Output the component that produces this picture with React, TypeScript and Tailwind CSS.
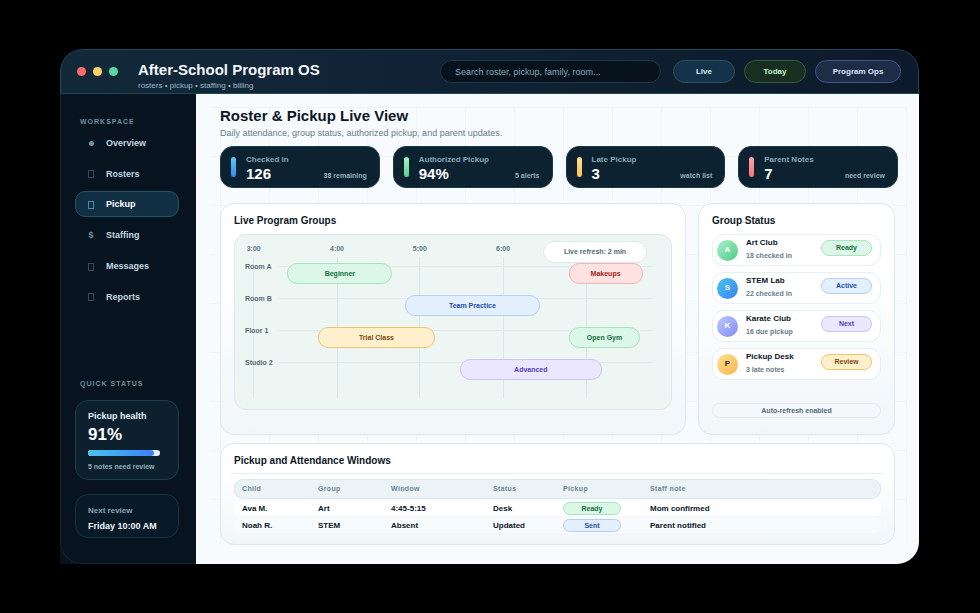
const navItems = [
    { label: "Overview", icon: "dot" },
    { label: "Rosters", icon: "box" },
    { label: "Pickup", icon: "box", active: true },
    { label: "Staffing", icon: "dollar" },
    { label: "Messages", icon: "box" },
    { label: "Reports", icon: "box" },
];

const stats = [
    { label: "Checked In", value: "126", note: "38 remaining", bar: "from-[#5cc8f5] to-[#3b82f6]" },
    { label: "Authorized Pickup", value: "94%", note: "5 alerts", bar: "from-[#a7f3c8] to-[#4fd18f]" },
    { label: "Late Pickup", value: "3", note: "watch list", bar: "from-[#fde293] to-[#fbbf52]" },
    { label: "Parent Notes", value: "7", note: "need review", bar: "from-[#fca5ac] to-[#f87178]" },
];

const tones = {
    green: "bg-[#dcf7e7] border-[#a5e6be] text-[#14713a]",
    blue: "bg-[#e4effe] border-[#b3cff8] text-[#1d4fa8]",
    purple: "bg-[#ebe7fe] border-[#cdc3fa] text-[#5540b4]",
    amber: "bg-[#fef0cd] border-[#f0c568] text-[#7c4a0c]",
    red: "bg-[#fee2e2] border-[#f8b4b4] text-[#a01c1c]",
};

type Tone = keyof typeof tones;

const hours = [
    { label: "3:00", left: 4.3 },
    { label: "4:00", left: 23.4 },
    { label: "5:00", left: 42.4 },
    { label: "6:00", left: 61.5 },
    { label: "", left: 80.6 },
];

const rooms: { name: string; events: { label: string; left: number; width: number; tone: Tone }[] }[] = [
    {
        name: "Room A",
        events: [
            { label: "Beginner", left: 12, width: 24.1, tone: "green" },
            { label: "Makeups", left: 76.5, width: 17, tone: "red" },
        ],
    },
    { name: "Room B", events: [{ label: "Team Practice", left: 38.9, width: 31.1, tone: "blue" }] },
    {
        name: "Floor 1",
        events: [
            { label: "Trial Class", left: 19, width: 26.9, tone: "amber" },
            { label: "Open Gym", left: 76.5, width: 16.5, tone: "green" },
        ],
    },
    { name: "Studio 2", events: [{ label: "Advanced", left: 51.6, width: 32.5, tone: "purple" }] },
];

const groups: { name: string; note: string; status: string; tone: Tone; avatar: string }[] = [
    { name: "Art Club", note: "18 checked in", status: "Ready", tone: "green", avatar: "from-[#a7f3c8] to-[#4cc88a] text-white" },
    { name: "STEM Lab", note: "22 checked in", status: "Active", tone: "blue", avatar: "from-[#4cc3ee] to-[#3b82f6] text-white" },
    { name: "Karate Club", note: "16 due pickup", status: "Next", tone: "purple", avatar: "from-[#bcc8fd] to-[#818cf8] text-white" },
    { name: "Pickup Desk", note: "3 late notes", status: "Review", tone: "amber", avatar: "from-[#fde08f] to-[#f7b751] text-[#3b2a08]" },
];

const records: { child: string; group: string; window: string; status: string; pickup: string; tone: Tone; note: string }[] = [
    { child: "Ava M.", group: "Art", window: "4:45-5:15", status: "Desk", pickup: "Ready", tone: "green", note: "Mom confirmed" },
    { child: "Noah R.", group: "STEM", window: "Absent", status: "Updated", pickup: "Sent", tone: "blue", note: "Parent notified" },
];

const panel = "rounded-[14px] border border-[#dbe8ef] bg-gradient-to-b from-white from-30% to-[#f1f6f9]";

function NavIcon({ icon, active }: { icon: string; active?: boolean }) {
    if (icon === "dot") return <span className="h-[5px] w-[5px] rounded-full bg-[#6d93a6]" />;
    if (icon === "dollar") return <span className="text-[9px] text-[#6d93a6]">$</span>;
    return <span className={`h-2 w-[6px] border ${active ? "border-[#3f8fa6]" : "border-[#2f4a59]"}`} />;
}

function Header() {
    return (
        <header className="flex h-[45px] items-start rounded-t-[22px] border border-[#1f4756] bg-gradient-to-r from-[#12293a] to-[#0d1a2b] pt-[10px] pr-[17px] pl-4">
            <div className="flex h-[22px] items-center gap-[7px]">
                <span className="h-[9px] w-[9px] rounded-full bg-[#ff6b6b]" />
                <span className="h-[9px] w-[9px] rounded-full bg-[#ffd166]" />
                <span className="h-[9px] w-[9px] rounded-full bg-[#5ad69a]" />
            </div>
            <div className="ml-5 flex-1">
                <p className="text-[15px] leading-5 font-bold text-[#f1f7fb]">After-School Program OS</p>
                <p className="text-[8px] leading-[11px] text-[#9db8c6]">rosters • pickup • staffing • billing</p>
            </div>
            <input
                type="text"
                aria-label="Search"
                placeholder="Search roster, pickup, family, room..."
                className="h-[23px] w-[221px] rounded-full border border-[#1b3947] bg-[#07121d] px-[14px] text-[9px] text-white placeholder:text-[#8ba4b1] focus:outline-none"
            />
            <div className="ml-3 flex gap-[9px] text-[8px] font-bold">
                <button className="h-[23px] w-[62px] rounded-full border border-[#245064] bg-[#14334a] text-[#d6effa]">Live</button>
                <button className="h-[23px] w-[62px] rounded-full border border-[#2c6041] bg-[#182e20] text-[#c6f5d2]">Today</button>
                <button className="h-[23px] w-[86px] rounded-full border border-[#3e5590] bg-[#1f2c47] text-[#dbe3fb]">Program Ops</button>
            </div>
        </header>
    );
}

function Sidebar() {
    return (
        <aside className="w-[136px] shrink-0 bg-[#07131f]">
            <div className="h-full rounded-bl-[22px] border-b border-l border-[#122833] pr-[17px] pl-[14px]">
                <p className="pt-[23px] pl-[5px] text-[7px] leading-[10px] font-bold tracking-[1px] text-[#6f8e9e]">WORKSPACE</p>
                <nav className="mt-[2px] flex h-[180px] flex-col justify-between">
                    {navItems.map((item) => (
                        <a
                            key={item.label}
                            href="#"
                            className={`flex h-[26px] items-center rounded-[10px] border pt-[3px] pl-[10px] text-[9px] font-bold ${item.active ? "border-[#265064] bg-[#112f42] text-white" : "border-transparent text-[#c2d8e2]"}`}
                        >
                            <span className="mr-[10px] flex w-[10px] justify-center">
                                <NavIcon icon={item.icon} active={item.active} />
                            </span>
                            {item.label}
                        </a>
                    ))}
                </nav>
                <p className="mt-[70px] pl-[5px] text-[7px] leading-[10px] font-bold tracking-[1px] text-[#6f8e9e]">QUICK STATUS</p>
                <section className="mt-[11px] rounded-[13px] border border-[#1b3d4b] bg-[#0d202e] px-3 pt-[9px] pb-[7px]">
                    <h2 className="text-[9px] leading-3 font-bold text-[#e2f0f6]">Pickup health</h2>
                    <p className="mt-[3px] text-[17px] leading-5 font-bold text-white">91%</p>
                    <div className="mt-[5px] mr-[6px] h-[6px] overflow-hidden rounded-full bg-[#e8f1fa]">
                        <div className="h-full w-[91%] rounded-full bg-gradient-to-r from-[#4cc3ee] to-[#3b82f6]" />
                    </div>
                    <p className="mt-[6px] text-[7px] leading-[10px] font-bold text-[#93b0be]">5 notes need review</p>
                </section>
                <section className="mt-[14px] rounded-[13px] border border-[#16343f] bg-[#081a27] px-3 pt-[10px] pb-[5px]">
                    <h2 className="text-[8px] leading-3 font-bold text-[#86a5b4]">Next review</h2>
                    <p className="mt-[3px] text-[9px] leading-3 font-bold text-[#eef7fb]">Friday 10:00 AM</p>
                </section>
            </div>
        </aside>
    );
}

function GridLines() {
    return (
        <svg className="pointer-events-none absolute top-[13px] left-[14px] h-[437px] w-[697px]" aria-hidden="true">
            <defs>
                <pattern id="grid" width="49" height="49" patternUnits="userSpaceOnUse">
                    <path d="M10.5 0V49M0 .5H49" stroke="#f0f5f9" fill="none" />
                </pattern>
            </defs>
            <rect width="100%" height="100%" fill="url(#grid)" />
        </svg>
    );
}

function Schedule() {
    return (
        <section className={`${panel} flex-1 px-[13px] pt-[9px] pb-6`}>
            <h2 className="text-[10px] leading-4 font-bold text-[#0b1626]">Live Program Groups</h2>
            <div className="relative mt-[5px] h-[176px] rounded-[12px] border border-[#dbe9ea] bg-[#eef6f3] pt-[31px]">
                {hours.map((hour) => (
                    <div
                        key={hour.left}
                        className="absolute top-[9px] flex w-10 -translate-x-1/2 flex-col items-center text-[7px] leading-[10px] font-bold text-[#5d7581]"
                        style={{ left: `${hour.left}%` }}
                    >
                        <span className="h-[13px]">{hour.label}</span>
                        <span className="h-[141px] w-px bg-[#d8e8ea]" />
                    </div>
                ))}
                {rooms.map((room) => (
                    <div key={room.name} className="relative flex h-8 items-start pr-[18px] pl-[10px]">
                        <span className="relative -mt-1 w-[34px] text-[7px] leading-[10px] font-bold whitespace-nowrap text-[#526b78]">{room.name}</span>
                        <span className="h-px flex-1 bg-[#dfecee]" />
                        {room.events.map((event) => (
                            <div
                                key={event.label}
                                className={`absolute -top-[3px] flex h-[21px] items-center justify-center rounded-[10px] border pt-[2px] text-[7px] font-bold ${tones[event.tone]}`}
                                style={{ left: `${event.left}%`, width: `${event.width}%` }}
                            >
                                {event.label}
                            </div>
                        ))}
                    </div>
                ))}
                <div className="absolute top-[6px] right-6 flex h-[22px] w-[104px] items-center justify-center rounded-full border border-[#dbe9ea] bg-white text-[7px] font-bold text-[#526b78]">
                    Live refresh: 2 min
                </div>
            </div>
        </section>
    );
}

function GroupStatus() {
    return (
        <section className={`${panel} w-[197px] px-[13px] pt-[9px]`}>
            <h2 className="text-[10px] leading-4 font-bold text-[#0b1626]">Group Status</h2>
            <ul className="mt-[5px] flex flex-col gap-[6px]">
                {groups.map((group) => (
                    <li key={group.name} className="flex h-8 items-center rounded-[12px] border border-[#e6eff3] bg-white pr-2 pl-1">
                        <span className={`flex h-[21px] w-[21px] items-center justify-center rounded-full bg-gradient-to-br text-[8px] font-bold ${group.avatar}`}>
                            {group.name[0]}
                        </span>
                        <div className="ml-2 flex-1 font-bold">
                            <p className="-mt-[2px] text-[8px] leading-[13px] text-[#0b1626]">{group.name}</p>
                            <p className="text-[7px] leading-[13px] text-[#647d89]">{group.note}</p>
                        </div>
                        <span className={`mb-1 flex h-4 w-[51px] items-center justify-center rounded-full border pt-px text-[7px] font-bold ${tones[group.tone]}`}>
                            {group.status}
                        </span>
                    </li>
                ))}
            </ul>
            <p className="mt-[23px] rounded-full border border-[#dfebf0] bg-[#f4f8fa] text-center text-[7px] leading-[13px] font-bold text-[#526b78]">
                Auto-refresh enabled
            </p>
        </section>
    );
}

function Attendance() {
    return (
        <section className={`${panel} mt-2 mr-[3px] px-[13px] pt-2 pb-[9px]`}>
            <h2 className="text-[10px] leading-[18px] font-bold text-[#0b1626]">Pickup and Attendance Windows</h2>
            <hr className="-mx-[3px] mt-[3px] border-[#e6eff3]" />
            <table className="mt-[3px] w-full table-fixed border-separate border-spacing-x-0 border-spacing-y-[2px] text-left text-[8px]">
                <thead>
                    <tr className="h-5 text-[7px] tracking-wider text-[#6b8490] [&>th]:border-y [&>th]:border-[#dbe8ec] [&>th]:bg-[#ecf3f6] [&>th]:p-0 [&>th]:pl-2 [&>th:first-child]:pl-[7px]">
                        <th className="w-[76px] rounded-l-[9px] border-l">Child</th>
                        <th className="w-[73px]">Group</th>
                        <th className="w-[102px]">Window</th>
                        <th className="w-[70px]">Status</th>
                        <th className="w-[87px]">Pickup</th>
                        <th className="rounded-r-[9px] border-r">Staff note</th>
                    </tr>
                </thead>
                <tbody className="font-bold text-[#0b1626]">
                    {records.map((record) => (
                        <tr key={record.child} className="h-[15px] leading-[13px] [&>td]:p-0 [&>td]:pl-2 odd:[&>td]:bg-white [&:nth-child(even)>td]:bg-[#f8fbfd]">
                            <td className="rounded-l-md">{record.child}</td>
                            <td>{record.group}</td>
                            <td>{record.window}</td>
                            <td>{record.status}</td>
                            <td>
                                <span className={`block h-[13px] w-[58px] rounded-full border text-center text-[7px] leading-[11px] ${tones[record.tone]}`}>
                                    {record.pickup}
                                </span>
                            </td>
                            <td className="rounded-r-md">{record.note}</td>
                        </tr>
                    ))}
                </tbody>
            </table>
        </section>
    );
}

export default function App() {
    return (
        <div className="flex min-h-screen flex-col bg-black py-[49px] pr-[61px] pl-[60px] font-['Liberation_Sans',Arial,sans-serif]">
            <div className="flex flex-1 flex-col overflow-hidden rounded-t-[22px] rounded-br-[22px]">
                <Header />
                <div className="flex flex-1">
                    <Sidebar />
                    <main className="relative flex-1 bg-[#f8fbfe] pt-3 pr-[21px] pb-[19px] pl-6">
                        <GridLines />
                        <div className="relative">
                            <h1 className="text-[15px] leading-5 font-bold text-[#0b1626]">Roster &amp; Pickup Live View</h1>
                            <p className="text-[9px] leading-[14px] text-[#647d89]">
                                Daily attendance, group status, authorized pickup, and parent updates.
                            </p>
                            <div className="mt-[6px] grid grid-cols-4 gap-[13px]">
                                {stats.map((stat) => (
                                    <div key={stat.label} className="flex h-[42px] rounded-[13px] border border-[#1a3544] bg-[#0d2230] pt-[7px] pr-3 pl-[10px] font-bold">
                                        <span className={`mt-[3px] h-5 w-[5px] rounded-full bg-gradient-to-b ${stat.bar}`} />
                                        <div className="ml-[10px] flex-1">
                                            <p className="text-[8px] leading-3 text-[#86a9b8]">{stat.label}</p>
                                            <div className="flex items-center justify-between">
                                                <p className="text-[15px] leading-4 text-white">{stat.value}</p>
                                                <p className="pt-1 text-[7px] leading-3 text-[#93b0be]">{stat.note}</p>
                                            </div>
                                        </div>
                                    </div>
                                ))}
                            </div>
                            <div className="mt-[15px] mr-[3px] flex gap-3">
                                <Schedule />
                                <GroupStatus />
                            </div>
                            <Attendance />
                        </div>
                    </main>
                </div>
            </div>
        </div>
    );
}
